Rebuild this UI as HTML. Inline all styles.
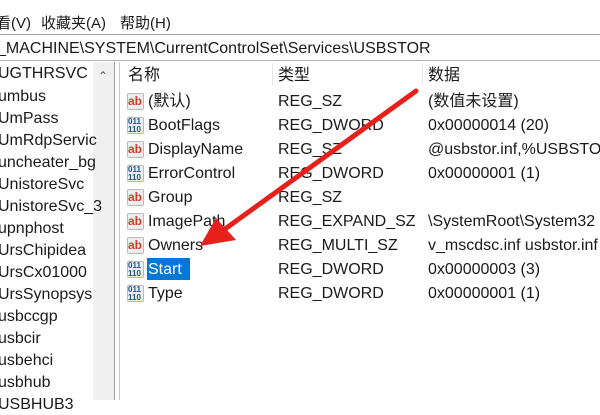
<!DOCTYPE html>
<html><head><meta charset="utf-8"><style>
*{margin:0;padding:0;box-sizing:border-box}
body{width:600px;height:400px;overflow:hidden;background:#fff;font-family:"Liberation Sans","Noto Sans CJK SC",sans-serif;color:#1a1a1a;position:relative}
.a{position:absolute;white-space:nowrap;line-height:20px}
.menu{font-size:15px;top:14px}
.tree{font-size:16px;left:-2px}
.row{font-size:16px}
.ic{position:absolute;width:17px;height:17px}
</style></head><body>
<div class="a menu" style="left:-4px">看(V)</div>
<div class="a menu" style="left:41px">收藏夹(A)</div>
<div class="a menu" style="left:120px">帮助(H)</div>
<div class="a" style="left:0;top:34px;width:600px;height:27px;border-top:1px solid #a0a0a0;border-bottom:1px solid #b0b0b0"></div>
<div class="a" style="left:-3px;top:39px;font-size:16px">_MACHINE\SYSTEM\CurrentControlSet\Services\USBSTOR</div>
<div class="a" style="left:93px;top:62px;width:21px;height:338px;background:#f0f0f0"></div>
<div class="a" style="left:98px;top:66px;font-size:12px;color:#555">&#8963;</div>
<div class="a" style="left:114px;top:62px;width:1px;height:338px;background:#a0a0a0"></div>
<div class="a" style="left:119px;top:62px;width:1px;height:338px;background:#c8c8c8"></div>
<div class="a" style="left:272px;top:63px;width:1px;height:22px;background:#e5e5e5"></div>
<div class="a" style="left:422px;top:63px;width:1px;height:22px;background:#e5e5e5"></div>
<div class="a tree" style="top:64px">UGTHRSVC</div>
<div class="a tree" style="top:87px">umbus</div>
<div class="a tree" style="top:109px">UmPass</div>
<div class="a tree" style="top:131px">UmRdpServic</div>
<div class="a tree" style="top:153px">uncheater_bg</div>
<div class="a tree" style="top:175px">UnistoreSvc</div>
<div class="a tree" style="top:197px">UnistoreSvc_3</div>
<div class="a tree" style="top:219px">upnphost</div>
<div class="a tree" style="top:241px">UrsChipidea</div>
<div class="a tree" style="top:263px">UrsCx01000</div>
<div class="a tree" style="top:285px">UrsSynopsys</div>
<div class="a tree" style="top:307px">usbccgp</div>
<div class="a tree" style="top:329px">usbcir</div>
<div class="a tree" style="top:351px">usbehci</div>
<div class="a tree" style="top:373px">usbhub</div>
<div class="a tree" style="top:395px">USBHUB3</div>
<div class="a row" style="left:128px;top:66px">名称</div>
<div class="a row" style="left:278px;top:66px">类型</div>
<div class="a row" style="left:428px;top:66px">数据</div>
<div class="a" style="left:147px;top:258px;width:43px;height:22px;background:#0078d7"></div>
<div id="rows"></div>
<script>
var r=[["ab","(默认)","REG_SZ","(数值未设置)"],["n","BootFlags","REG_DWORD","0x00000014 (20)"],["ab","DisplayName","REG_SZ","@usbstor.inf,%USBSTOR"],["n","ErrorControl","REG_DWORD","0x00000001 (1)"],["ab","Group","REG_SZ",""],["ab","ImagePath","REG_EXPAND_SZ","\\SystemRoot\\System32"],["ab","Owners","REG_MULTI_SZ","v_mscdsc.inf usbstor.inf"],["n","Start","REG_DWORD","0x00000003 (3)"],["n","Type","REG_DWORD","0x00000001 (1)"]];
var h="";
r.forEach(function(e,i){var y=92+i*24;
h+='<div class="ic" style="left:127px;top:'+(y+1)+'px;background:#eee;border:1px solid #bbb;border-radius:2px"></div>';
if(e[0]=="ab")h+='<div class="a" style="left:128px;top:'+(y-1)+'px;font-size:12px;font-weight:bold;color:#c8402a">ab</div>';
else h+='<div class="a" style="left:128px;top:'+(y+2)+'px;font-size:8px;font-weight:bold;color:#1f4fa0;line-height:8px">011<br>110</div>';
h+='<div class="a row" style="left:148px;top:'+y+'px;'+(i==7?'color:#fff':'')+'">'+e[1]+'</div>';
h+='<div class="a row" style="left:278px;top:'+y+'px">'+e[2]+'</div>';
h+='<div class="a row" style="left:428px;top:'+y+'px">'+e[3]+'</div>';});
document.getElementById("rows").innerHTML=h;
</script>
<svg class="a" style="left:0;top:0" width="600" height="400">
<line x1="416" y1="91" x2="225" y2="229" stroke="#e8201c" stroke-width="5" stroke-linecap="round"/>
<polygon points="200,246 216,218 236,240" fill="#e8201c"/>
</svg>
</body></html>
